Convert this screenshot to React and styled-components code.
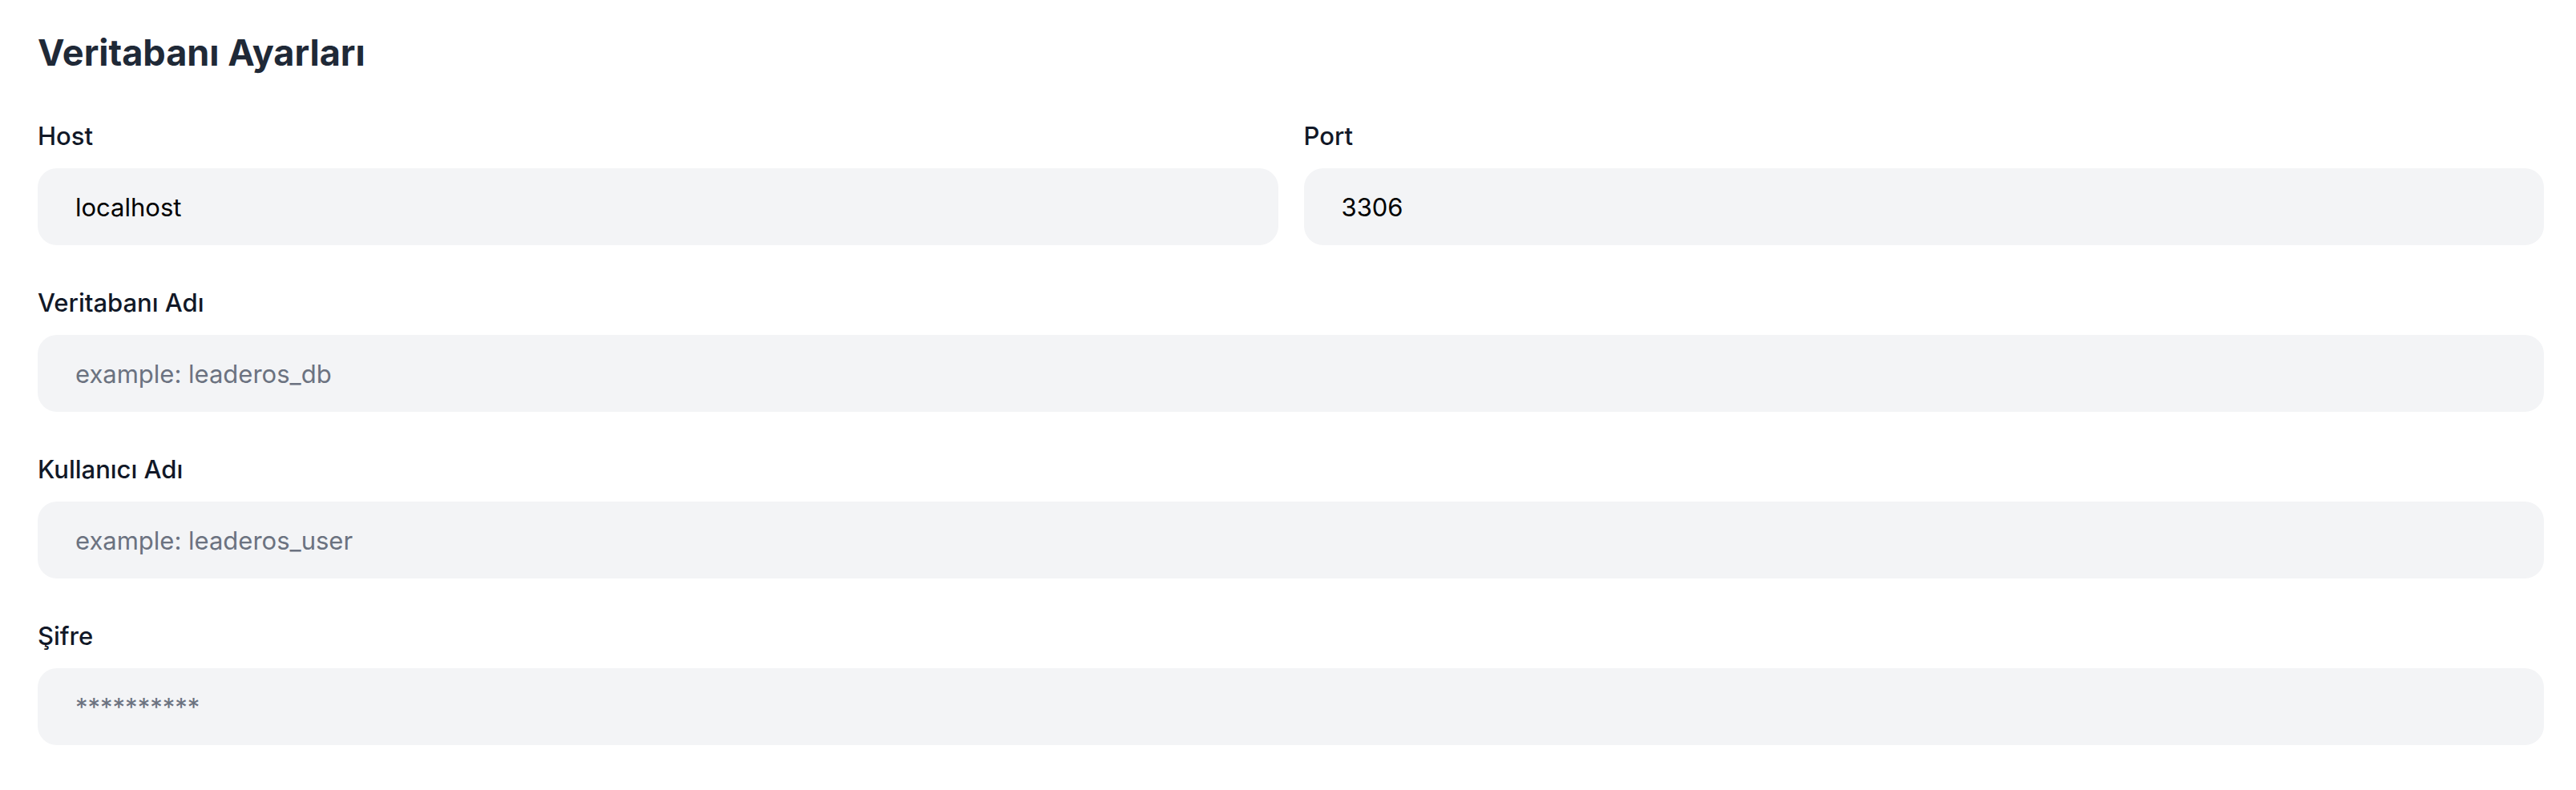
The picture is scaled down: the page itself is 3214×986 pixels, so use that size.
import styled, { createGlobalStyle } from "styled-components";

const GlobalStyle = createGlobalStyle`
  body {
    margin: 0;
    background: #ffffff;
    font-family: Inter, "Noto Sans", sans-serif;
  }
`;

const Page = styled.div`
  padding: 40px 40px 48px 47px;
`;

const Title = styled.h2`
  margin: 0 0 54px;
  font-size: 45px;
  line-height: 52px;
  font-weight: 700;
  color: #1f2937;
`;

const Form = styled.div`
  display: flex;
  flex-direction: column;
  gap: 48px;
`;

const Row = styled.div`
  display: grid;
  grid-template-columns: repeat(${(p) => p.cols || 1}, 1fr);
  gap: 32px;
`;

const Field = styled.div`
  display: flex;
  flex-direction: column;
  gap: 16px;
`;

const Label = styled.label`
  font-size: 31px;
  line-height: 48px;
  font-weight: 500;
  color: #111827;
`;

const Input = styled.input`
  box-sizing: border-box;
  width: 100%;
  height: 96px;
  padding: 0 47px;
  border: none;
  outline: none;
  border-radius: 24px;
  background: #f3f4f6;
  font-family: inherit;
  font-size: 31px;
  color: #000000;

  &::placeholder {
    color: #6b7280;
  }
`;

function FormField({ label, ...rest }) {
  return (
    <Field>
      <Label>{label}</Label>
      <Input {...rest} />
    </Field>
  );
}

export default function App() {
  return (
    <>
      <GlobalStyle />
      <Page>
        <Title>Veritabanı Ayarları</Title>
        <Form>
          <Row cols={2}>
            <FormField label="Host" type="text" defaultValue="localhost" />
            <FormField label="Port" type="text" defaultValue="3306" />
          </Row>
          <FormField label="Veritabanı Adı" type="text" placeholder="example: leaderos_db" />
          <FormField label="Kullanıcı Adı" type="text" placeholder="example: leaderos_user" />
          <FormField label="Şifre" type="password" placeholder="**********" />
        </Form>
      </Page>
    </>
  );
}
